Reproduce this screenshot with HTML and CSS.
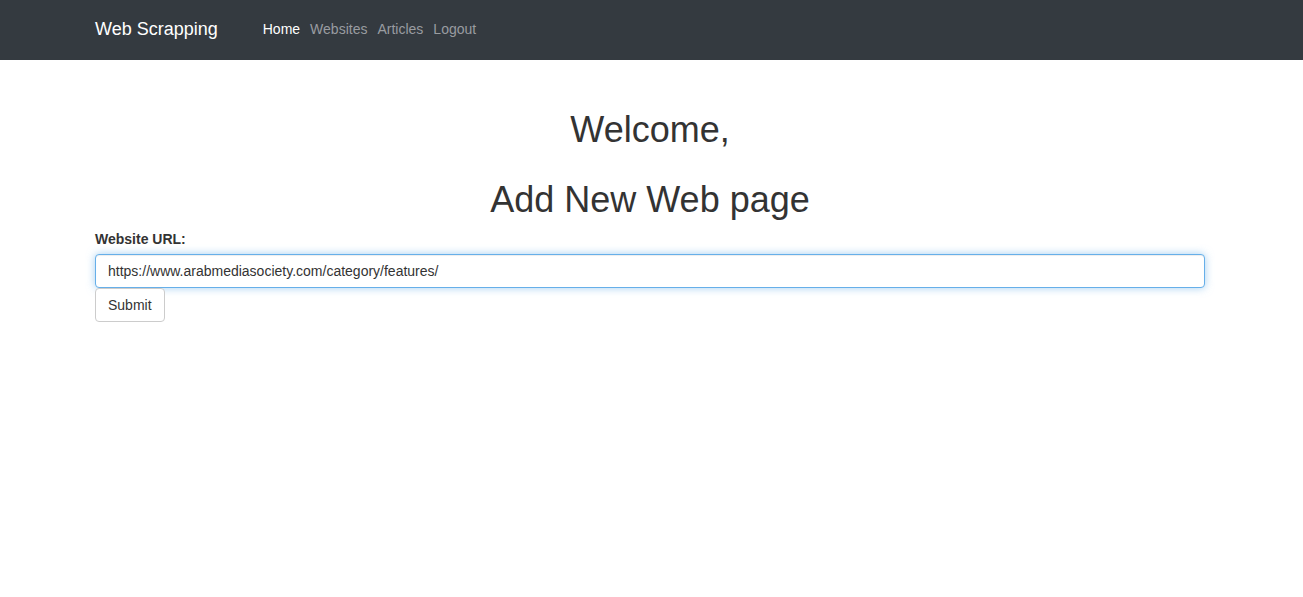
FILE: index.html
```html
<!DOCTYPE html>
<html lang="en">
<head>
<meta charset="utf-8">
<title>Web Scrapping</title>
<link rel="stylesheet" href="styles.css">
</head>
<body>
<nav class="navbar">
  <div class="container navbar-inner">
    <a class="brand" href="#">Web Scrapping</a>
    <ul class="nav">
      <li><a class="nav-link active" href="#">Home</a></li>
      <li><a class="nav-link" href="#">Websites</a></li>
      <li><a class="nav-link" href="#">Articles</a></li>
      <li><a class="nav-link" href="#">Logout</a></li>
    </ul>
  </div>
</nav>
<main class="container main">
  <h1 class="title">Welcome,</h1>
  <h1 class="title">Add New Web page</h1>
  <form class="form">
    <label class="label" for="url">Website URL:</label>
    <input class="input" id="url" type="text" value="https://www.arabmediasociety.com/category/features/">
    <button class="btn" type="button">Submit</button>
  </form>
</main>
</body>
</html>
```

FILE: styles.css
```css
* { box-sizing: border-box; }
html, body { margin: 0; padding: 0; background: #fff; }
body {
  font-family: "Liberation Sans", Arial, sans-serif;
  font-size: 14px;
  line-height: 1.42857;
  color: #333;
}
.container {
  width: 1110px;
  margin-left: 95px;
}
.navbar {
  background: #343a40;
  height: 60px;
}
.navbar-inner {
  display: flex;
  align-items: center;
  height: 60px;
  padding-bottom: 2px;
}
.brand {
  color: #fff;
  font-size: 18px;
  line-height: 20px;
  text-decoration: none;
  margin-right: 40px;
}
.nav {
  display: flex;
  list-style: none;
  margin: 0;
  padding: 0;
}
.nav-link {
  display: block;
  padding: 0 5px;
  font-size: 14px;
  line-height: 20px;
  color: #999ca0;
  text-decoration: none;
}
.nav-link.active { color: #fff; }
.main {
  display: flex;
  flex-direction: column;
  padding-top: 30px;
}
.title {
  font-size: 36px;
  font-weight: 500;
  line-height: 1.1;
  text-align: center;
  margin: 20px 0 10px;
  height: 39.6px;
  color: #333;
}
.form { display: block; }
.label {
  display: inline-block;
  font-weight: bold;
  margin-bottom: 5px;
  line-height: 20px;
}
.input {
  display: block;
  width: 100%;
  height: 34px;
  padding: 6px 12px;
  font-family: inherit;
  font-size: 14px;
  color: #333;
  background: #fff;
  border: 1px solid #66afe9;
  border-radius: 4px;
  outline: 0;
  box-shadow: inset 0 1px 1px rgba(0,0,0,.075), 0 0 8px rgba(102,175,233,.6);
}
.btn {
  display: inline-block;
  height: 34px;
  padding: 6px 12px;
  font-family: inherit;
  font-size: 14px;
  line-height: 20px;
  color: #333;
  background: #fff;
  border: 1px solid #ccc;
  border-radius: 4px;
}
```
